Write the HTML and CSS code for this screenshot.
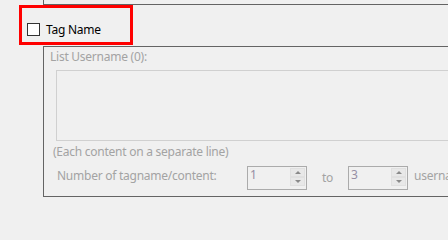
FILE: index.html
```html
<!DOCTYPE html>
<html>
<head>
<meta charset="utf-8">
<link rel="stylesheet" href="styles.css">
</head>
<body>
<div class="page">
  <div class="prev-group"></div>
  <div class="highlight">
    <div class="check-row">
      <span class="checkbox"></span>
      <span class="check-label">Tag Name</span>
    </div>
  </div>
  <div class="group">
    <div class="list-label">List Username (0):</div>
    <div class="textarea"></div>
    <div class="hint">(Each content on a separate line)</div>
    <div class="num-row">
      <span class="num-label">Number of tagname/content:</span>
      <div class="spin">
        <span class="spin-value">1</span>
        <div class="spin-btns">
          <span class="spin-btn"><span class="arrow-up"></span></span>
          <span class="spin-btn"><span class="arrow-down"></span></span>
        </div>
      </div>
      <span class="to-label">to</span>
      <div class="spin">
        <span class="spin-value">3</span>
        <div class="spin-btns">
          <span class="spin-btn"><span class="arrow-up"></span></span>
          <span class="spin-btn"><span class="arrow-down"></span></span>
        </div>
      </div>
      <span class="unit-label">username</span>
    </div>
  </div>
</div>
</body>
</html>
```

FILE: styles.css
```css
html, body {
  margin: 0;
  padding: 0;
  background: #f0f0f0;
}
body {
  width: 448px;
  height: 201px;
  overflow: hidden;
  font-family: "Noto Sans", "Open Sans", sans-serif;
  font-size: 12px;
  line-height: 16px;
  letter-spacing: -0.25px;
  color: #a3a3a3;
}
.page {
  width: 448px;
  height: 201px;
  overflow: hidden;
}
.prev-group {
  margin-left: 43px;
  width: 500px;
  height: 4px;
  border-left: 1px solid #646464;
  border-bottom: 1px solid #646464;
}
.highlight {
  margin-left: 19px;
  width: 114px;
  height: 40px;
  box-sizing: border-box;
  border: 3px solid #ff0000;
  padding: 13px 0 0 5px;
}
.check-row {
  display: flex;
  align-items: center;
  height: 17px;
}
.checkbox {
  width: 13px;
  height: 13px;
  box-sizing: border-box;
  border: 1px solid #333333;
  background: #ffffff;
  flex-shrink: 0;
}
.check-label {
  margin-left: 6px;
  color: #000000;
  white-space: nowrap;
}
.group {
  margin-left: 43px;
  margin-top: 1px;
  width: 500px;
  height: 151px;
  box-sizing: border-box;
  border-left: 1px solid #646464;
  border-top: 1px solid #646464;
  border-bottom: 1px solid #646464;
  padding-top: 2px;
}
.list-label {
  margin-left: 6px;
  white-space: nowrap;
}
.textarea {
  margin-top: 5px;
  margin-left: 12px;
  height: 71px;
  box-sizing: border-box;
  border: 1px solid #d0d0d0;
  background: #f0f0f0;
}
.hint {
  margin-top: 3px;
  margin-left: 9px;
  white-space: nowrap;
}
.num-row {
  display: flex;
  align-items: flex-start;
  margin-top: 6px;
  margin-left: 13px;
  white-space: nowrap;
}
.num-label {
  width: 190px;
  flex-shrink: 0;
  margin-top: 2px;
}
.spin {
  width: 60px;
  height: 24px;
  box-sizing: border-box;
  border: 1px solid #ababab;
  display: flex;
  justify-content: space-between;
  flex-shrink: 0;
}
.spin-value {
  padding-left: 2px;
  color: #968ea4;
}
.spin-btns {
  display: flex;
  flex-direction: column;
  margin: 1px 1px 0 0;
}
.spin-btn {
  width: 15px;
  height: 9px;
  box-sizing: border-box;
  background: #e8e8e8;
  border: 1px solid #e0e0e0;
  display: flex;
  align-items: center;
  justify-content: center;
}
.arrow-up {
  width: 0;
  height: 0;
  border-left: 3px solid transparent;
  border-right: 3px solid transparent;
  border-bottom: 3px solid #8a8a8a;
}
.arrow-down {
  width: 0;
  height: 0;
  border-left: 3px solid transparent;
  border-right: 3px solid transparent;
  border-top: 3px solid #8a8a8a;
}
.to-label {
  width: 26px;
  flex-shrink: 0;
  margin-left: 15px;
  margin-top: 4px;
}
.unit-label {
  margin-left: 6px;
  margin-top: 2px;
}
```
